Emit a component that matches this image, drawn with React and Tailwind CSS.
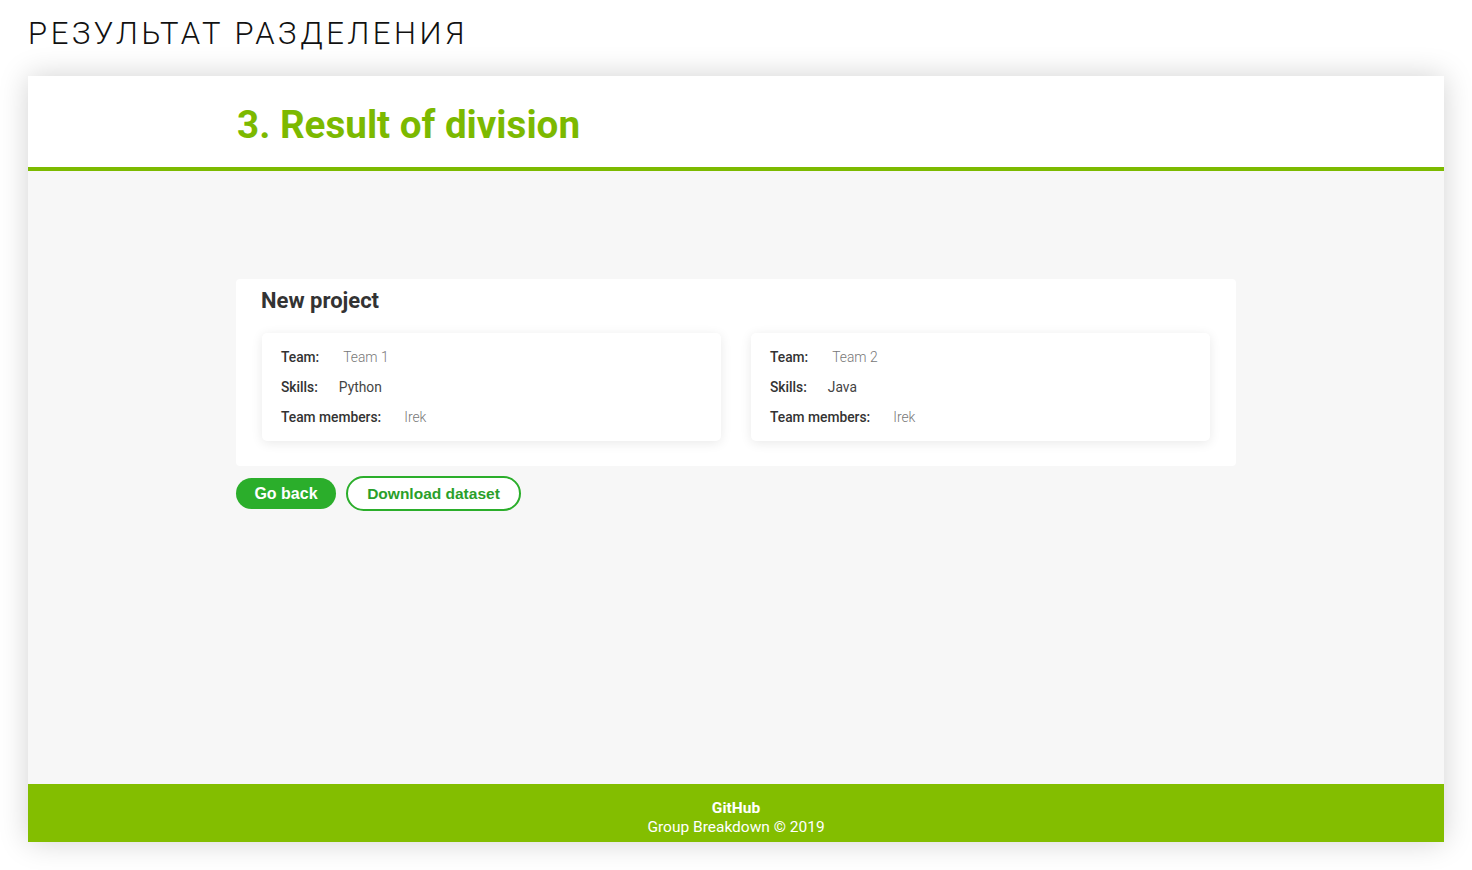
export default function App() {
  const teams = [
    { team: "Team 1", skills: "Python", members: "Irek" },
    { team: "Team 2", skills: "Java", members: "Irek" },
  ];
  return (
    <div className="w-[1472px] h-[870px] bg-white overflow-hidden px-[28px]" style={{ fontFamily: "Roboto, 'Noto Sans', sans-serif" }}>
      <div className="h-[76px] flex items-start pt-[15px]">
        <h1 className="text-[31px] leading-[38px] font-light tracking-[3.6px] text-[#111] uppercase">Результат разделения</h1>
      </div>
      <div className="h-[766px] flex flex-col shadow-[0_0_28px_rgba(0,0,0,0.18)]">
        <header className="h-[91px] bg-white flex items-center">
          <div className="w-[1000px] mx-auto">
            <h2 className="text-[38.6px] font-bold text-[#7cb900] leading-none pl-[1px] pt-[8px]">3. Result of division</h2>
          </div>
        </header>
        <div className="h-[4px] bg-[#7cba00]"></div>
        <main className="flex-1 bg-[#f7f7f7] pt-[108px]">
          <div className="w-[1000px] mx-auto">
            <div className="bg-white rounded-[4px] px-[26px] pt-[8px] pb-[25px]">
              <h3 className="text-[22px] font-bold text-[#333] leading-[28px] mb-[18px] -ml-[1px]">New project</h3>
              <div className="grid grid-cols-2 gap-[30px]">
                {teams.map((t) => (
                  <div key={t.team} className="bg-white rounded-[5px] shadow-[0_2px_12px_rgba(0,0,0,0.09)] px-[19px] py-[9px] text-[13.8px]">
                    <div className="h-[30px] flex items-center">
                      <span className="font-medium text-[#333]">Team:</span>
                      <span className="ml-[24px] font-light text-[#777]">{t.team}</span>
                    </div>
                    <div className="h-[30px] flex items-center">
                      <span className="font-medium text-[#333]">Skills:</span>
                      <span className="ml-[21px] text-[#444]">{t.skills}</span>
                    </div>
                    <div className="h-[30px] flex items-center">
                      <span className="font-medium text-[#333]">Team members:</span>
                      <span className="ml-[23px] font-light text-[#777]">{t.members}</span>
                    </div>
                  </div>
                ))}
              </div>
            </div>
            <div className="flex items-center gap-[10px] mt-[10px]" style={{ fontFamily: "'Liberation Sans', Arial, sans-serif" }}>
              <button className="h-[31px] w-[100px] rounded-full bg-[#2bae2b] text-white font-bold text-[16px]">Go back</button>
              <button className="h-[35px] w-[175px] rounded-full border-2 border-[#2bae2b] bg-white text-[#2a9f2a] font-bold text-[15.5px]">Download dataset</button>
            </div>
          </div>
        </main>
        <footer className="h-[58px] bg-[#83be00] flex flex-col items-center justify-center text-white text-[15.5px] leading-[19px] pt-[9px]">
          <div className="font-bold">GitHub</div>
          <div>Group Breakdown © 2019</div>
        </footer>
      </div>
    </div>
  );
}
